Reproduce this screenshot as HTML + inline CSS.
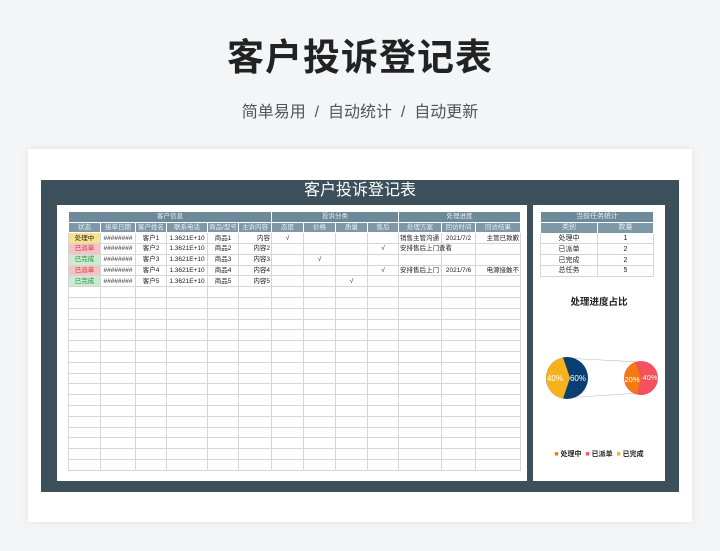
<!DOCTYPE html>
<html><head><meta charset="utf-8"><style>
*{margin:0;padding:0;box-sizing:border-box}
body{width:720px;height:551px;background:#f4f5f7;font-family:"Liberation Sans","Noto Sans CJK SC",sans-serif;position:relative;overflow:hidden}
.t{position:absolute;top:27px;left:0;width:720px;text-align:center;font-size:37px;font-weight:bold;color:#222;letter-spacing:1px}
.s{position:absolute;top:98px;left:0;width:720px;text-align:center;font-size:16px;color:#555}
.card{position:absolute;left:28px;top:149px;width:664px;height:373px;background:#fff;box-shadow:0 0 8px rgba(0,0,0,.08)}
.dark{position:absolute;left:41px;top:180px;width:638px;height:312px;background:#3b505b}
.dt{position:absolute;left:41px;top:180px;width:638px;text-align:center;color:#fff;font-size:16px;line-height:22px}
.w1{position:absolute;left:57px;top:205px;width:470px;height:276px;background:#fff}
.w2{position:absolute;left:533px;top:205px;width:132px;height:276px;background:#fff}
table{border-collapse:collapse;table-layout:fixed;position:absolute}
td{border:1px solid #d6d6d6;height:10.8px;font-size:6.5px;line-height:9px;padding:0 1px;white-space:nowrap;overflow:hidden;text-align:center;color:#222}
tr.h td{background:#6e899a;color:#e6edf2;border-color:#fff;height:10.5px}
tr.h2 td{background:#7f98a8;color:#e6edf2;border-color:#fff}
.y{background:#fde08a}.r{background:#f9c1c7;color:#c0392b}.g{background:#c9ecd0;color:#2e8b3e}
.rt{text-align:right}.l{text-align:left}
#t2 td{font-size:7px;height:10.8px}
</style></head><body>
<div class="t">客户投诉登记表</div>
<div class="s">简单易用 &nbsp;/&nbsp; 自动统计 &nbsp;/&nbsp; 自动更新</div>
<div class="card"></div>
<div class="dark"></div>
<div class="dt">客户投诉登记表</div>
<div class="w1"></div>
<div class="w2"></div>
<table style="left:68px;top:211px;width:452px">
<colgroup><col style="width:32px"><col style="width:35px"><col style="width:31px"><col style="width:41px"><col style="width:31px"><col style="width:33px"><col style="width:32px"><col style="width:32px"><col style="width:32px"><col style="width:31px"><col style="width:43px"><col style="width:34px"><col style="width:45px"></colgroup>
<tr class="h"><td colspan="6">客户信息</td><td colspan="4">投诉分类</td><td colspan="3">处理进度</td></tr>
<tr class="h2"><td>状态</td><td>接单日期</td><td>客户姓名</td><td>联系电话</td><td>商品/型号</td><td>主诉内容</td><td>态度</td><td>价格</td><td>质量</td><td>售后</td><td>处理方案</td><td>回访时间</td><td>回访结果</td></tr>
<tr><td class="y">处理中</td><td>########</td><td>客户1</td><td>1.3621E+10</td><td>商品1</td><td class="rt">内容</td><td>√</td><td></td><td></td><td></td><td class="l">销售主管沟通</td><td>2021/7/2</td><td class="rt">主管已致歉</td></tr>
<tr><td class="r">已派单</td><td>########</td><td>客户2</td><td>1.3621E+10</td><td>商品2</td><td class="rt">内容2</td><td></td><td></td><td></td><td>√</td><td class="l" style="overflow:visible">安排售后上门查看</td><td></td><td></td></tr>
<tr><td class="g">已完成</td><td>########</td><td>客户3</td><td>1.3621E+10</td><td>商品3</td><td class="rt">内容3</td><td></td><td>√</td><td></td><td></td><td></td><td></td><td></td></tr>
<tr><td class="r">已派单</td><td>########</td><td>客户4</td><td>1.3621E+10</td><td>商品4</td><td class="rt">内容4</td><td></td><td></td><td></td><td>√</td><td class="l">安排售后上门</td><td>2021/7/6</td><td class="rt">电源接触不</td></tr>
<tr><td class="g">已完成</td><td>########</td><td>客户5</td><td>1.3621E+10</td><td>商品5</td><td class="rt">内容5</td><td></td><td></td><td>√</td><td></td><td></td><td></td><td></td></tr>
<tr><td></td><td></td><td></td><td></td><td></td><td></td><td></td><td></td><td></td><td></td><td></td><td></td><td></td></tr>
<tr><td></td><td></td><td></td><td></td><td></td><td></td><td></td><td></td><td></td><td></td><td></td><td></td><td></td></tr>
<tr><td></td><td></td><td></td><td></td><td></td><td></td><td></td><td></td><td></td><td></td><td></td><td></td><td></td></tr>
<tr><td></td><td></td><td></td><td></td><td></td><td></td><td></td><td></td><td></td><td></td><td></td><td></td><td></td></tr>
<tr><td></td><td></td><td></td><td></td><td></td><td></td><td></td><td></td><td></td><td></td><td></td><td></td><td></td></tr>
<tr><td></td><td></td><td></td><td></td><td></td><td></td><td></td><td></td><td></td><td></td><td></td><td></td><td></td></tr>
<tr><td></td><td></td><td></td><td></td><td></td><td></td><td></td><td></td><td></td><td></td><td></td><td></td><td></td></tr>
<tr><td></td><td></td><td></td><td></td><td></td><td></td><td></td><td></td><td></td><td></td><td></td><td></td><td></td></tr>
<tr><td></td><td></td><td></td><td></td><td></td><td></td><td></td><td></td><td></td><td></td><td></td><td></td><td></td></tr>
<tr><td></td><td></td><td></td><td></td><td></td><td></td><td></td><td></td><td></td><td></td><td></td><td></td><td></td></tr>
<tr><td></td><td></td><td></td><td></td><td></td><td></td><td></td><td></td><td></td><td></td><td></td><td></td><td></td></tr>
<tr><td></td><td></td><td></td><td></td><td></td><td></td><td></td><td></td><td></td><td></td><td></td><td></td><td></td></tr>
<tr><td></td><td></td><td></td><td></td><td></td><td></td><td></td><td></td><td></td><td></td><td></td><td></td><td></td></tr>
<tr><td></td><td></td><td></td><td></td><td></td><td></td><td></td><td></td><td></td><td></td><td></td><td></td><td></td></tr>
<tr><td></td><td></td><td></td><td></td><td></td><td></td><td></td><td></td><td></td><td></td><td></td><td></td><td></td></tr>
<tr><td></td><td></td><td></td><td></td><td></td><td></td><td></td><td></td><td></td><td></td><td></td><td></td><td></td></tr>
<tr><td></td><td></td><td></td><td></td><td></td><td></td><td></td><td></td><td></td><td></td><td></td><td></td><td></td></tr>
</table>
<table id="t2" style="left:540px;top:211px;width:113px">
<colgroup><col style="width:57px"><col style="width:56px"></colgroup>
<tr class="h"><td colspan="2">当前任务统计</td></tr>
<tr class="h2"><td>类别</td><td>数量</td></tr>
<tr><td>处理中</td><td>1</td></tr>
<tr><td>已派单</td><td>2</td></tr>
<tr><td>已完成</td><td>2</td></tr>
<tr><td>总任务</td><td>5</td></tr>
</table>
<div style="position:absolute;left:533px;top:294px;width:132px;text-align:center;font-size:9.5px;font-weight:bold;color:#222">处理进度占比</div>
<svg style="position:absolute;left:533px;top:340px" width="132" height="80" viewBox="0 0 132 80">
<line x1="31" y1="18" x2="107" y2="22" stroke="#bbb" stroke-width=".6"/>
<line x1="31" y1="58" x2="107" y2="53" stroke="#bbb" stroke-width=".6"/>
<circle cx="34" cy="38" r="21" fill="#083e72"/>
<path d="M30 17.4 L37 38 L30 58.6 A21 21 0 0 1 30 17.4 Z" fill="#f6b21b"/>
<circle cx="108" cy="38" r="17" fill="#f5505b"/>
<path d="M108 38 L102 22 A17 17 0 0 0 104 54 Z" fill="#f57a10"/>
<text x="22" y="41" font-size="8" fill="#fff" text-anchor="middle" font-family="Liberation Sans">40%</text>
<text x="45" y="41" font-size="8" fill="#fff" text-anchor="middle" font-family="Liberation Sans">60%</text>
<text x="99" y="42" font-size="7.5" fill="#fff" text-anchor="middle" font-family="Liberation Sans">20%</text>
<text x="117" y="40" font-size="7.5" fill="#fff" text-anchor="middle" font-family="Liberation Sans">40%</text>
</svg>
<div style="position:absolute;left:533px;top:449px;width:132px;text-align:center;font-size:7px;color:#222;font-weight:bold"><span style="color:#f57a10">■</span> 处理中 &nbsp;<span style="color:#f5505b">■</span> 已派单 &nbsp;<span style="color:#f6b21b">■</span> 已完成</div>
</body></html>
